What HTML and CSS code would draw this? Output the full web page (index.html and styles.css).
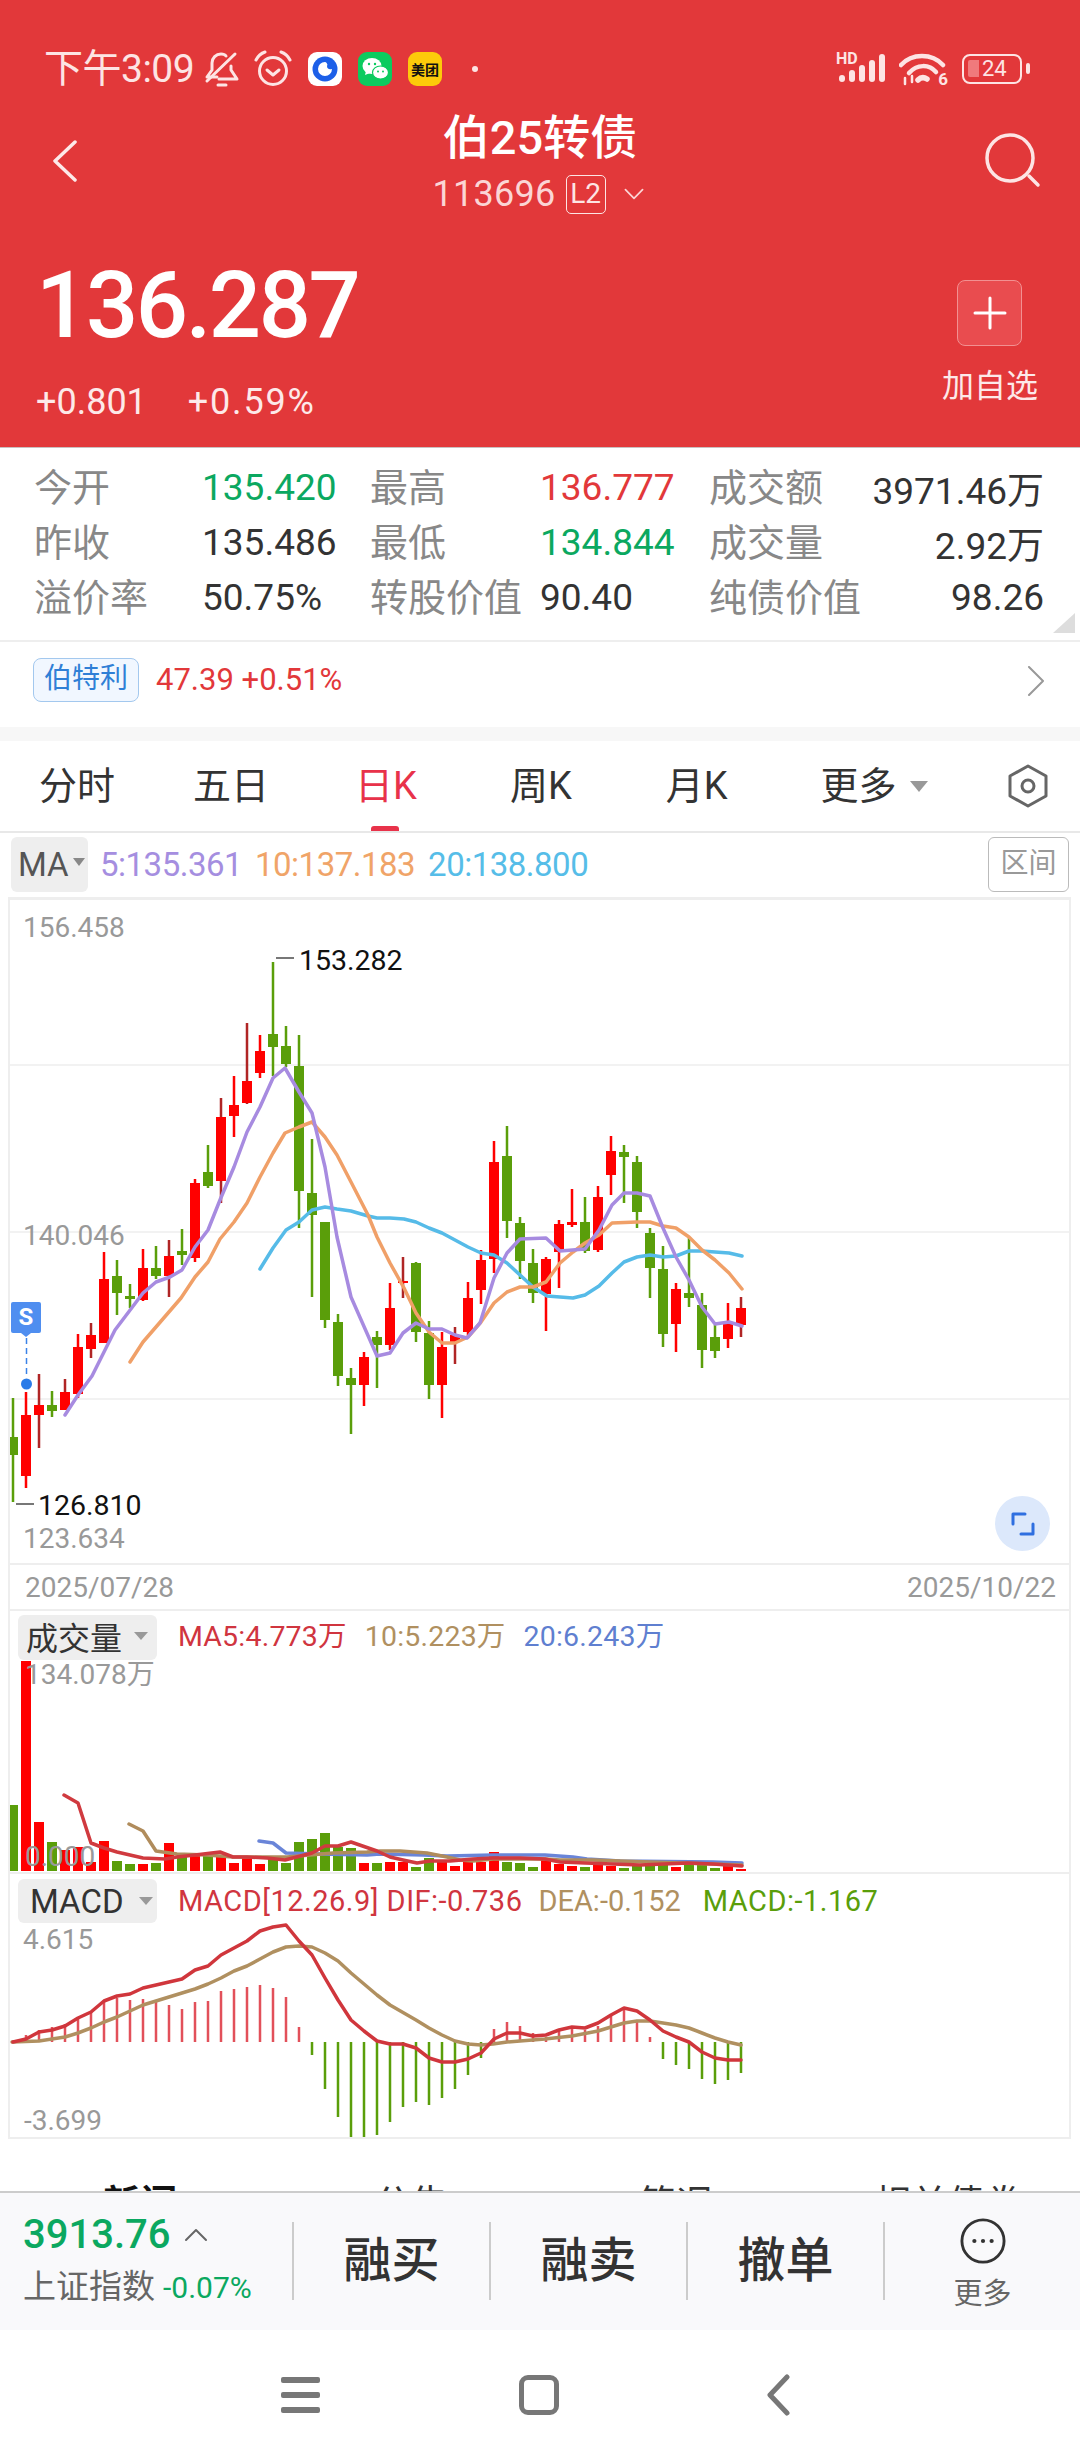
FILE: index.html
```html
<!DOCTYPE html>
<html lang="zh-CN">
<head>
    <meta charset="UTF-8">
    <meta name="viewport" content="width=device-width, initial-scale=1.0">
    <title>伯25转债</title>
    <link rel="stylesheet" href="styles.css">
</head>
<body>
    <div class="page">
        <header class="header">
            <div class="status-bar">
                <span class="status-time">下午3:09</span>
                <svg class="ico-bell" viewBox="0 0 36 38" fill="none" stroke="#fde4e4" stroke-width="3" stroke-linecap="round" stroke-linejoin="round">
                    <path d="M13 26H3l5-7v-7c0-5 4-9 9-9 2 0 4 .6 5 2"/>
                    <path d="M27 15v4l6 9H15"/>
                    <path d="M3 30 31 3"/>
                    <path d="M14 34h8"/>
                </svg>
                <svg class="ico-alarm" viewBox="0 0 38 38" fill="none" stroke="#fde4e4" stroke-width="3" stroke-linecap="round" stroke-linejoin="round">
                    <circle cx="19" cy="21" r="13.5"/>
                    <path d="M13 20l6 5 6-5"/>
                    <path d="M2 10Q5 4 11 2"/>
                    <path d="M36 10Q33 4 27 2"/>
                </svg>
                <span class="app-ico app-blue">
                    <svg viewBox="0 0 34 34"><circle cx="17" cy="17" r="12.5" fill="#1c5fe8"/><path d="M17 10a7 7 0 1 0 7 7c-2 .6-3 .4-4-.4s-1.200-2-.6-4c-.6-1.400-1.200-2.600-2.400-2.600z" fill="#fff"/></svg>
                </span>
                <span class="app-ico app-green">
                    <svg viewBox="0 0 34 34"><ellipse cx="14" cy="14" rx="9.500" ry="8" fill="#fff"/><path d="M8 19l-1 4 5-2z" fill="#fff"/><ellipse cx="22.500" cy="20.500" rx="8" ry="6.500" fill="#fff" stroke="#0ccb5f" stroke-width="1.200"/><circle cx="11" cy="12" r="1.200" fill="#0ccb5f"/><circle cx="17" cy="12" r="1.200" fill="#0ccb5f"/><circle cx="20" cy="19.500" r="1" fill="#0ccb5f"/><circle cx="25" cy="19.500" r="1" fill="#0ccb5f"/></svg>
                </span>
                <span class="app-ico app-yellow">美团</span>
                <span class="status-dot"></span>
                <span class="status-right">
                    <span class="signal">
                        <span class="signal-hd">HD</span>
                        <svg viewBox="0 0 48 30" fill="#fde4e4">
                            <rect x="1" y="22" width="6" height="7" rx="3"/>
                            <rect x="11" y="17" width="6" height="12" rx="3"/>
                            <rect x="21" y="12" width="6" height="17" rx="3"/>
                            <rect x="31" y="7" width="6" height="22" rx="3"/>
                            <rect x="41" y="1" width="6" height="28" rx="3"/>
                        </svg>
                    </span>
                    <span class="wifi">
                        <svg viewBox="0 0 48 34" fill="none" stroke="#fde4e4" stroke-width="4.500" stroke-linecap="round">
                            <path d="M2 13C13 1 33 1 44 13"/>
                            <path d="M10 21C18 12 30 12 37 20"/>
                            <path d="M19 28c3-3 6-3 9-1" stroke-width="5.500"/>
                            <path d="M6 26v6M13 24v6" stroke-width="2.500"/>
                        </svg>
                        <span class="wifi-six">6</span>
                    </span>
                    <span class="battery">
                        <span class="battery-fill"></span>
                        <span class="battery-num">24</span>
                    </span>
                    <span class="battery-nub"></span>
                </span>
            </div>

            <div class="title-row">
                <svg class="ico-back" viewBox="0 0 26 42" fill="none" stroke="#fde9e9" stroke-width="3.500" stroke-linecap="round" stroke-linejoin="round"><path d="M23 2 3 21l20 19"/></svg>
                <div class="title-mid">
                    <div class="title-name">伯25转债</div>
                    <div class="title-code">
                        <span>113696</span>
                        <span class="badge-l2">L2</span>
                        <svg class="ico-down" viewBox="0 0 24 14" fill="none" stroke="#fbd5d5" stroke-width="2" stroke-linecap="round" stroke-linejoin="round"><path d="M2 2l10 10L22 2"/></svg>
                    </div>
                </div>
                <svg class="ico-search" viewBox="0 0 56 56" fill="none" stroke="#fde4e4" stroke-width="3.500" stroke-linecap="round"><circle cx="25" cy="26" r="23"/><path d="M44 44l9 9"/></svg>
            </div>

            <div class="quote-row">
                <div>
                    <div class="price">136.287</div>
                    <div class="price-change"><span>+0.801</span><span class="pct">+0.59%</span></div>
                </div>
                <div class="add-fav">
                    <span class="add-box"><svg viewBox="0 0 34 34" stroke="#fff" stroke-width="3" stroke-linecap="round"><path d="M17 2v30M2 17h30"/></svg></span>
                    <span class="add-text">加自选</span>
                </div>
            </div>
        </header>

        <section class="stats">
            <span class="lbl">今开</span><span class="val green">135.420</span>
            <span class="lbl">最高</span><span class="val red">136.777</span>
            <span class="lbl">成交额</span><span class="val right">3971.46万</span>
            <span class="lbl">昨收</span><span class="val">135.486</span>
            <span class="lbl">最低</span><span class="val green">134.844</span>
            <span class="lbl">成交量</span><span class="val right">2.92万</span>
            <span class="lbl">溢价率</span><span class="val">50.75%</span>
            <span class="lbl">转股价值</span><span class="val">90.40</span>
            <span class="lbl">纯债价值</span><span class="val right">98.26</span>
            <span class="corner"></span>
        </section>

        <section class="related">
            <span class="tag">伯特利</span>
            <span class="related-num">47.39 +0.51%</span>
            <svg class="ico-next" viewBox="0 0 18 30" fill="none" stroke="#999" stroke-width="2" stroke-linecap="round" stroke-linejoin="round"><path d="M2 1l14 14L2 29"/></svg>
        </section>

        <div class="gap"></div>

        <nav class="tabs">
            <span class="tab t1">分时</span>
            <span class="tab t2">五日</span>
            <span class="tab t3 active">日K</span>
            <span class="tab t4">周K</span>
            <span class="tab t5">月K</span>
            <span class="tab t6">更多<i class="caret"></i></span>
            <svg class="ico-hex" viewBox="0 0 42 44" fill="none" stroke="#666" stroke-width="3" stroke-linejoin="round"><path d="M21 2 39 12v20L21 42 3 32V12z"/><circle cx="21" cy="22" r="6"/></svg>
        </nav>

        <div class="ma-row">
            <span class="ma-btn">MA<i class="caret small"></i></span>
            <span class="ma-legend">
                <span class="c-purple">5:135.361</span>
                <span class="c-orange">10:137.183</span>
                <span class="c-blue">20:138.800</span>
            </span>
            <span class="range-btn">区间</span>
        </div>

        <div class="charts">
            <div class="kline-box">
                <svg id="kline" class="chart-svg kline" viewBox="10 897 1059 668">
                    <text x="23" y="937">156.458</text>
                    <text x="23" y="1245">140.046</text>
                    <text x="23" y="1548">123.634</text>
                    <text class="mark" x="299" y="970">153.282</text>
                    <text class="mark" x="38" y="1515">126.810</text>
                </svg>
                <div class="s-pin">S</div>
                <span class="expand">
                    <svg viewBox="0 0 24 24" fill="none" stroke="#2f6fe0" stroke-width="3" stroke-linecap="round" stroke-linejoin="round"><path d="M2 12V2h12"/><path d="M22 12v10H10"/></svg>
                </span>
            </div>

            <div class="dates"><span>2025/07/28</span><span>2025/10/22</span></div>

            <div class="sub-head vol-head">
                <span class="sub-btn">成交量<i class="caret"></i></span>
                <span class="sub-legend">
                    <span class="c-red">MA5:4.773万</span>
                    <span class="c-tan">10:5.223万</span>
                    <span class="c-steel">20:6.243万</span>
                </span>
            </div>
            <svg id="volume" class="chart-svg volume" viewBox="10 1660 1059 212">
                <text x="25" y="1684">134.078万</text>
                <text x="25" y="1866">0.000</text>
            </svg>

            <div class="sub-head macd-head">
                <span class="sub-btn mono">MACD<i class="caret"></i></span>
                <span class="sub-legend">
                    <span class="c-red spaced">MACD[12.26.9] DIF:-0.736</span>
                    <span class="c-tan">DEA:-0.152</span>
                    <span class="c-lime spaced macd-val">MACD:-1.167</span>
                </span>
            </div>
            <svg id="macd" class="chart-svg macd" viewBox="10 1923 1059 214">
                <text x="23" y="1949">4.615</text>
                <text x="24" y="2130">-3.699</text>
            </svg>
        </div>

        <div class="info-tabs">
            <span class="strong">新闻</span>
            <span>公告</span>
            <span>简况</span>
            <span>相关债券</span>
        </div>

        <footer class="trade-bar">
            <div class="index-box">
                <div class="index-top">
                    <span class="index-num">3913.76</span>
                    <svg viewBox="0 0 24 14" fill="none" stroke="#666" stroke-width="2" stroke-linecap="round" stroke-linejoin="round"><path d="M2 12 12 2l10 10"/></svg>
                </div>
                <div class="index-bottom"><span>上证指数</span><span class="index-pct">-0.07%</span></div>
            </div>
            <span class="trade-btn">融买</span>
            <span class="trade-btn">融卖</span>
            <span class="trade-btn">撤单</span>
            <div class="trade-more">
                <svg viewBox="0 0 48 48" fill="none" stroke="#333" stroke-width="3"><circle cx="24" cy="24" r="22"/><g fill="#333" stroke="none"><circle cx="15" cy="24" r="2.200"/><circle cx="24" cy="24" r="2.200"/><circle cx="33" cy="24" r="2.200"/></g></svg>
                <span>更多</span>
            </div>
        </footer>

        <div class="sys-nav">
            <span class="nav-menu"><i></i><i></i><i></i></span>
            <span class="nav-home"></span>
            <svg class="nav-back" viewBox="0 0 26 42" fill="none" stroke="#777" stroke-width="5" stroke-linecap="round" stroke-linejoin="round"><path d="M22 3 5 21l17 18"/></svg>
        </div>
    </div>

    <script src="chart.js"></script>
</body>
</html>
```

FILE: styles.css
```css
* {
    margin: 0;
    padding: 0;
    box-sizing: border-box;
}

html, body {
    width: 1080px;
    height: 2460px;
    overflow: hidden;
    background: #fff;
}

body {
    font-family: Roboto, "Noto Sans CJK SC", sans-serif;
    color: #333;
}

.page {
    width: 1080px;
    height: 2460px;
    display: flex;
    flex-direction: column;
}

i {
    font-style: normal;
}

svg {
    display: block;
    flex: none;
}

/* header */
.header {
    height: 448px;
    flex: none;
    background: #e2383a;
    border-bottom: 1px solid #c9c0c0;
    color: #fff;
}

.status-bar {
    height: 105px;
    display: flex;
    align-items: center;
    padding: 32px 0 0 44px;
    color: #fde4e4;
}

.status-time {
    width: 158px;
    font-size: 39px;
    line-height: 40px;
    white-space: nowrap;
    letter-spacing: -0.5px;
}

.ico-bell {
    width: 36px;
    height: 38px;
    margin: 2px 0 0 2px;
}

.ico-alarm {
    width: 38px;
    height: 38px;
    margin-left: 14px;
}

.app-ico {
    width: 34px;
    height: 34px;
    border-radius: 9px;
    display: flex;
    align-items: center;
    justify-content: center;
    margin-left: 16px;
    overflow: hidden;
}

.app-ico svg {
    width: 34px;
    height: 34px;
}

.app-blue {
    background: #fff;
}

.app-green {
    background: #0ccb5f;
}

.app-yellow {
    background: #fdcb0a;
    color: #111;
    font-size: 14px;
    font-weight: 700;
    white-space: nowrap;
}

.status-dot {
    width: 6px;
    height: 6px;
    border-radius: 50%;
    background: #fde4e4;
    margin-left: 30px;
}

.status-right {
    margin-left: auto;
    display: flex;
    align-items: center;
    padding-right: 50px;
}

.signal {
    position: relative;
    width: 48px;
    height: 32px;
}

.signal svg {
    width: 48px;
    height: 30px;
}

.signal-hd {
    position: absolute;
    left: -2px;
    top: -2px;
    font-size: 16px;
    line-height: 16px;
    font-weight: 700;
    color: #fde4e4;
}

.wifi {
    position: relative;
    width: 48px;
    height: 34px;
    margin-left: 13px;
}

.wifi svg {
    width: 48px;
    height: 34px;
}

.wifi-six {
    position: absolute;
    right: -1px;
    bottom: -2px;
    font-size: 17px;
    line-height: 17px;
    font-weight: 700;
}

.battery {
    width: 60px;
    height: 30px;
    margin-left: 15px;
    border: 2px solid #fde4e4;
    border-radius: 8px;
    display: flex;
    align-items: center;
    padding-left: 4px;
}

.battery-fill {
    width: 11px;
    height: 17px;
    background: #f07a7c;
    border-radius: 2px 0 0 2px;
}

.battery-num {
    font-size: 22px;
    line-height: 26px;
    margin-left: 3px;
}

.battery-nub {
    width: 4px;
    height: 11px;
    margin-left: 4px;
    background: #fde4e4;
    border-radius: 2px;
}

.title-row {
    height: 115px;
    display: flex;
    align-items: flex-start;
    justify-content: space-between;
    padding: 0 39px 0 52px;
    position: relative;
}

.ico-back {
    width: 26px;
    height: 42px;
    margin-top: 35px;
}

.title-mid {
    position: absolute;
    left: 0;
    right: 0;
    top: 3px;
    display: flex;
    flex-direction: column;
    align-items: center;
}

.title-name {
    font-size: 47px;
    line-height: 60px;
    font-weight: 500;
    color: #fff;
}

.title-code {
    display: flex;
    align-items: center;
    font-size: 36px;
    line-height: 40px;
    color: #fbd5d5;
    margin-top: 6px;
    padding-right: 3px;
    letter-spacing: 0.3px;
}

.badge-l2 {
    width: 40px;
    height: 39px;
    border: 1.5px solid #fde4e4;
    border-radius: 5px;
    margin-left: 10px;
    font-size: 28px;
    line-height: 36px;
    text-align: center;
    color: #fde4e4;
    letter-spacing: 0;
}

.ico-down {
    width: 22px;
    height: 12px;
    margin-left: 17px;
}

.ico-search {
    width: 56px;
    height: 56px;
    margin-top: 27px;
}

.quote-row {
    height: 227px;
    display: flex;
    justify-content: space-between;
    padding: 36px 42px 0 36px;
}

.price {
    font-size: 92px;
    line-height: 100px;
    font-weight: 500;
    letter-spacing: -2.4px;
    color: #fff;
}

.price-change {
    display: flex;
    gap: 41px;
    font-size: 36px;
    line-height: 44px;
    margin-top: 24px;
    color: #fde9e9;
}

.pct {
    letter-spacing: 1.8px;
}

.add-fav {
    display: flex;
    flex-direction: column;
    align-items: center;
    padding-top: 24px;
}

.add-box {
    width: 65px;
    height: 66px;
    background: #e94c4f;
    border: 1.5px solid #f29091;
    border-radius: 8px;
    display: flex;
    align-items: center;
    justify-content: center;
}

.add-box svg {
    width: 34px;
    height: 34px;
}

.add-text {
    font-size: 32px;
    line-height: 44px;
    margin-top: 18px;
    color: #fde9e9;
}

/* stats */
.stats {
    flex: none;
    height: 194px;
    position: relative;
    display: grid;
    grid-template-columns: 168px 168px 170px 169px 1fr auto;
    grid-auto-rows: 55px;
    align-items: center;
    padding: 12px 36px 0 34px;
    border-bottom: 2px solid #eee;
    font-size: 38px;
}

.lbl {
    color: #888;
    white-space: nowrap;
    line-height: 50px;
    margin-top: 0;
}

.val {
    color: #333;
    white-space: nowrap;
    font-size: 37px;
}

.right {
    text-align: right;
}

.green {
    color: #0ba860;
}

.red {
    color: #e2383a;
}

.corner {
    position: absolute;
    right: 5px;
    bottom: 7px;
    width: 0;
    height: 0;
    border-left: 22px solid transparent;
    border-bottom: 20px solid #ddd;
}

.related {
    flex: none;
    height: 85px;
    display: flex;
    align-items: flex-start;
    padding: 16px 35px 0 33px;
}

.tag {
    width: 106px;
    height: 44px;
    background: #f1f7ff;
    border: 1.5px solid #a3c8ee;
    border-radius: 8px;
    color: #2f7fd6;
    font-size: 28px;
    line-height: 40px;
    text-align: center;
}

.related-num {
    margin-left: 17px;
    color: #e2383a;
    font-size: 31px;
    line-height: 44px;
}

.ico-next {
    width: 18px;
    height: 30px;
    margin: 8px 0 0 auto;
}

.gap {
    flex: none;
    height: 14px;
    background: #f7f7f7;
}

/* period tabs */
.tabs {
    flex: none;
    height: 92px;
    position: relative;
    display: flex;
    align-items: center;
    border-bottom: 2px solid #e8e8e8;
    font-size: 38px;
    color: #333;
}

.tab {
    white-space: nowrap;
    line-height: 46px;
}

.t1 { margin-left: 39px; }
.t2 { margin-left: 78px; }
.t3 { margin-left: 86px; }
.t4 { margin-left: 93px; }
.t5 { margin-left: 94px; }
.t6 { margin-left: 93px; display: flex; align-items: center; }

.active {
    color: #e8324a;
}

.active::after {
    content: "";
    position: absolute;
    left: 371px;
    bottom: 0;
    width: 28px;
    height: 5px;
    border-radius: 3px 3px 0 0;
    background: #e8324a;
}

.caret {
    width: 0;
    height: 0;
    border-left: 9px solid transparent;
    border-right: 9px solid transparent;
    border-top: 11px solid #999;
    margin-left: 13px;
}

.caret.small {
    border-left-width: 6px;
    border-right-width: 6px;
    border-top-width: 8px;
    border-top-color: #888;
    margin-left: 4px;
    margin-top: -6px;
}

.ico-hex {
    width: 42px;
    height: 44px;
    margin-left: auto;
    margin-right: 31px;
}

/* MA legend */
.ma-row {
    flex: none;
    height: 64px;
    display: flex;
    align-items: flex-start;
    padding: 4px 11px 0 11px;
}

.ma-btn {
    width: 77px;
    height: 55px;
    background: #eee;
    border-radius: 6px;
    display: flex;
    align-items: center;
    padding-left: 7px;
    font-size: 33px;
    color: #555;
}

.ma-legend {
    display: flex;
    gap: 13px;
    margin-left: 12px;
    font-size: 33px;
    line-height: 55px;
    letter-spacing: -0.5px;
}

.c-purple { color: #a58ee0; }
.c-orange { color: #f0a468; }
.c-blue { color: #56bde8; }
.c-red { color: #d0353f; }
.c-tan { color: #b09060; }
.c-steel { color: #5f7fd0; }
.c-lime { color: #5a9e0a; }

.range-btn {
    width: 81px;
    height: 55px;
    margin-left: auto;
    border: 1.5px solid #bbb;
    border-radius: 6px;
    color: #999;
    font-size: 28px;
    line-height: 51px;
    text-align: center;
}

/* charts */
.charts {
    flex: none;
    height: 1242px;
    margin: 0 9px 0 8px;
    border-left: 2px solid #eee;
    border-right: 2px solid #eee;
    border-bottom: 2px solid #eee;
    position: relative;
}

.chart-svg {
    width: 1059px;
}

.chart-svg text {
    font-family: Roboto, "Noto Sans CJK SC", sans-serif;
    font-size: 28px;
    fill: #999;
}

.chart-svg text.mark {
    fill: #111;
    font-size: 28.500px;
}

.kline-box {
    position: relative;
    height: 668px;
    border-bottom: 2px solid #eee;
    overflow: hidden;
}

.kline {
    height: 668px;
}

.volume {
    height: 212px;
}

.macd {
    height: 214px;
}

.s-pin {
    position: absolute;
    left: 1px;
    top: 405px;
    width: 30px;
    height: 31px;
    background: #4f8ef0;
    border-radius: 2px;
    color: #fff;
    font-size: 24px;
    font-weight: 700;
    line-height: 31px;
    text-align: center;
}

.s-pin::after {
    content: "";
    position: absolute;
    left: 10px;
    top: 31px;
    border-left: 5px solid transparent;
    border-right: 5px solid transparent;
    border-top: 4px solid #4f8ef0;
}

.expand {
    position: absolute;
    left: 985px;
    top: 599px;
    width: 55px;
    height: 55px;
    border-radius: 50%;
    background: #dce8fb;
    display: flex;
    align-items: center;
    justify-content: center;
}

.expand svg {
    width: 24px;
    height: 24px;
}

.dates {
    height: 46px;
    display: flex;
    justify-content: space-between;
    align-items: center;
    padding: 0 13px 0 15px;
    font-size: 28px;
    color: #999;
    border-bottom: 2px solid #eee;
}

.sub-head {
    display: flex;
    align-items: flex-start;
    padding: 4px 0 0 8px;
    height: 49px;
}

.vol-head .sub-legend {
    font-size: 28.500px;
    gap: 18px;
    letter-spacing: 0.2px;
}

.macd-head {
    height: 51px;
    padding-top: 5px;
    border-top: 2px solid #eee;
}

.sub-btn {
    width: 139px;
    height: 45px;
    background: #eee;
    border-radius: 6px;
    display: flex;
    align-items: center;
    padding: 0 0 4px 8px;
    font-size: 32px;
    color: #333;
    white-space: nowrap;
}

.macd-head .sub-btn {
    height: 44px;
}

.sub-btn.mono {
    padding: 0 0 0 12px;
    font-size: 33px;
}

.sub-btn .caret {
    border-left-width: 7px;
    border-right-width: 7px;
    border-top-width: 8px;
    margin-left: 12px;
}

.sub-btn.mono .caret {
    margin-left: 15px;
}

.sub-legend {
    display: flex;
    gap: 16px;
    margin-left: 21px;
    font-size: 29px;
    line-height: 44px;
    white-space: nowrap;
}

.spaced {
    letter-spacing: 0.5px;
}

.macd-val {
    margin-left: 6px;
}

/* cut off by the trade bar */
.info-tabs {
    flex: none;
    height: 52px;
    overflow: hidden;
    display: flex;
    padding-top: 42px;
    font-size: 37px;
    line-height: 48px;
    color: #333;
}

.info-tabs span:nth-child(1) { margin-left: 103px; font-weight: 700; color: #111; }
.info-tabs span:nth-child(2) { margin-left: 197px; }
.info-tabs span:nth-child(3) { margin-left: 191px; }
.info-tabs span:nth-child(4) { margin-left: 161px; }

/* bottom bar */
.trade-bar {
    flex: none;
    height: 139px;
    background: #f9f9fb;
    border-top: 2px solid #ccc;
    display: flex;
    align-items: flex-start;
    position: relative;
}

.index-box {
    width: 294px;
    height: 78px;
    margin-top: 29px;
    padding-left: 23px;
    border-right: 2px solid #ccc;
}

.index-top {
    display: flex;
    align-items: center;
    height: 44px;
    margin-top: -9px;
}

.index-num {
    font-size: 40px;
    line-height: 44px;
    font-weight: 500;
    color: #0ba860;
}

.index-top svg {
    width: 24px;
    height: 14px;
    margin: 0 0 0 13px;
}

.index-bottom {
    display: flex;
    align-items: baseline;
    gap: 8px;
    margin-top: 10px;
    font-size: 33px;
    line-height: 40px;
    color: #666;
    white-space: nowrap;
}

.index-pct {
    color: #0ba860;
    font-size: 30px;
}

.trade-btn {
    width: 197px;
    height: 78px;
    margin-top: 29px;
    border-right: 2px solid #ccc;
    font-size: 48px;
    line-height: 78px;
    font-weight: 500;
    text-align: center;
    color: #333;
}

.trade-btn:nth-of-type(4) {
    width: 198px;
}

.trade-more {
    flex: 1;
    display: flex;
    flex-direction: column;
    align-items: center;
    padding: 25px 0 0 0;
    font-size: 29px;
    line-height: 36px;
    color: #666;
}

.trade-more svg {
    width: 46px;
    height: 46px;
}

.trade-more span {
    margin-top: 12px;
}

/* android nav */
.sys-nav {
    flex: 1;
    display: flex;
    align-items: flex-start;
    padding-top: 45px;
    background: #fff;
}

.nav-menu {
    width: 39px;
    height: 36px;
    margin-left: 281px;
    margin-top: 2px;
    display: flex;
    flex-direction: column;
    justify-content: space-between;
}

.nav-menu i {
    display: block;
    height: 6px;
    border-radius: 2px;
    background: #777;
}

.nav-home {
    width: 40px;
    height: 40px;
    margin-left: 199px;
    border: 5px solid #777;
    border-radius: 9px;
}

.nav-back {
    width: 26px;
    height: 42px;
    margin-left: 206px;
    margin-top: -1px;
}
```

FILE: chart.js
```js
// all y values below are page pixels, the svg viewBoxes line up with the page
const RED = '#ff0000';
const GREEN = '#5a9e0a';
const xAt = i => 13 + 13 * i;

// hi, body top, body bottom, lo
const candles = [
    [1398, 1437, 1455, 1502, 'g'], [1392, 1415, 1476, 1488, 'r'], [1374, 1405, 1415, 1448, 'r'],
    [1391, 1405, 1411, 1417, 'g'], [1379, 1392, 1410, 1410, 'r'], [1334, 1347, 1394, 1398, 'r'],
    [1323, 1335, 1349, 1358, 'r'], [1252, 1279, 1343, 1343, 'r'], [1260, 1276, 1293, 1315, 'g'],
    [1284, 1296, 1299, 1308, 'g'], [1249, 1268, 1300, 1301, 'r'], [1246, 1268, 1276, 1279, 'g'],
    [1240, 1256, 1276, 1297, 'r'], [1229, 1251, 1255, 1265, 'g'], [1179, 1183, 1258, 1262, 'r'],
    [1145, 1172, 1186, 1188, 'g'], [1098, 1117, 1181, 1203, 'r'], [1076, 1105, 1116, 1137, 'r'],
    [1023, 1081, 1103, 1104, 'r'], [1035, 1051, 1073, 1078, 'r'], [962, 1034, 1047, 1076, 'g'],
    [1026, 1046, 1064, 1067, 'g'], [1035, 1066, 1191, 1228, 'g'], [1139, 1193, 1215, 1297, 'g'],
    [1222, 1222, 1320, 1328, 'g'], [1314, 1322, 1376, 1386, 'g'], [1368, 1378, 1385, 1434, 'g'],
    [1352, 1357, 1385, 1406, 'r'], [1331, 1337, 1345, 1388, 'g'], [1283, 1308, 1345, 1350, 'r'],
    [1257, 1281, 1283, 1298, 'r'], [1262, 1263, 1332, 1342, 'g'], [1321, 1333, 1385, 1399, 'g'],
    [1332, 1347, 1385, 1418, 'r'], [1327, 1335, 1342, 1364, 'r'], [1282, 1298, 1332, 1337, 'r'],
    [1250, 1260, 1290, 1304, 'r'], [1141, 1162, 1259, 1273, 'r'], [1126, 1156, 1221, 1238, 'g'],
    [1217, 1223, 1261, 1279, 'g'], [1249, 1263, 1293, 1303, 'g'], [1257, 1259, 1294, 1331, 'r'],
    [1220, 1224, 1252, 1288, 'r'], [1189, 1222, 1225, 1227, 'r'], [1197, 1222, 1251, 1253, 'g'],
    [1186, 1197, 1250, 1252, 'r'], [1136, 1151, 1175, 1195, 'r'], [1145, 1152, 1157, 1203, 'g'],
    [1156, 1162, 1212, 1228, 'g'], [1228, 1233, 1268, 1298, 'g'], [1246, 1269, 1334, 1347, 'g'],
    [1283, 1289, 1324, 1352, 'r'], [1238, 1293, 1298, 1307, 'g'], [1293, 1305, 1350, 1368, 'g'],
    [1325, 1337, 1351, 1358, 'g'], [1303, 1324, 1339, 1348, 'r'], [1297, 1308, 1325, 1337, 'r']
];
// these wicks look darker in the app
const darkWicks = new Set([2, 4, 6, 12, 16, 18, 30, 34, 56]);

const ma5 = '65,1415 78,1395 92,1376 115,1330 143,1293 156,1282 170,1277 182,1270 195,1247 208,1230 220,1200 234,1167 247,1132 260,1107 273,1078 285,1068 299,1092 312,1113 325,1167 337,1237 351,1297 377,1356 390,1353 403,1333 416,1323 429,1329 442,1329 455,1335 467,1338 480,1323 494,1278 507,1253 520,1239 546,1238 560,1251 585,1249 599,1230 612,1205 624,1193 637,1193 650,1196 663,1228 676,1257 689,1280 702,1307 715,1324 729,1322 742,1326';
const ma10 = '130,1362 143,1342 181,1298 195,1277 208,1262 220,1239 234,1222 247,1203 260,1177 273,1153 285,1133 299,1127 312,1122 325,1137 337,1155 351,1182 368,1215 377,1237 390,1263 404,1288 416,1313 429,1332 442,1343 455,1343 468,1337 481,1322 494,1303 507,1292 520,1287 533,1287 546,1282 560,1263 573,1252 585,1243 599,1235 612,1223 637,1222 650,1222 663,1226 676,1228 689,1237 702,1250 715,1260 729,1273 742,1289';
const ma20 = '260,1269 273,1248 286,1230 299,1222 312,1210 325,1207 337,1209 351,1211 368,1216 377,1218 390,1218 404,1219 416,1222 429,1228 442,1233 455,1240 468,1247 481,1253 494,1255 507,1263 520,1275 533,1287 547,1296 560,1297 573,1298 585,1295 599,1286 612,1273 624,1262 637,1257 650,1255 663,1257 676,1256 689,1251 702,1251 715,1252 729,1253 742,1256';

// bar tops, baseline is 1871
const volumes = [
    [1805, 'g'], [1661, 'r'], [1822, 'r'], [1842, 'g'], [1850, 'r'], [1847, 'r'], [1862, 'r'], [1841, 'r'],
    [1861, 'g'], [1864, 'g'], [1864, 'r'], [1863, 'g'], [1843, 'r'], [1855, 'g'], [1855, 'r'], [1855, 'g'],
    [1855, 'r'], [1863, 'r'], [1857, 'r'], [1864, 'r'], [1859, 'g'], [1863, 'g'], [1842, 'g'], [1839, 'g'],
    [1833, 'g'], [1847, 'g'], [1848, 'g'], [1863, 'r'], [1863, 'g'], [1862, 'r'], [1862, 'r'], [1867, 'g'],
    [1858, 'g'], [1862, 'r'], [1866, 'r'], [1862, 'r'], [1862, 'r'], [1852, 'r'], [1862, 'g'], [1863, 'g'],
    [1867, 'g'], [1860, 'r'], [1864, 'r'], [1866, 'r'], [1867, 'g'], [1863, 'r'], [1866, 'r'], [1868, 'g'],
    [1866, 'g'], [1865, 'g'], [1865, 'g'], [1867, 'r'], [1865, 'g'], [1865, 'g'], [1868, 'g'], [1866, 'r'],
    [1869, 'r']
];
const volMa5 = '64,1795 78,1803 91,1843 104,1848 117,1852 143,1858 165,1859 177,1857 195,1855 220,1852 233,1857 247,1857 267,1858 285,1860 312,1853 325,1846 338,1846 351,1842 377,1851 390,1857 403,1860 417,1863 430,1861 450,1861 473,1859 493,1858 520,1858 545,1859 560,1862 585,1863 613,1864 640,1865 688,1863 713,1864 742,1866';
const volMa10 = '129,1824 143,1831 156,1851 177,1854 207,1855 233,1857 287,1857 333,1853 367,1852 380,1851 400,1851 427,1853 447,1857 460,1860 473,1861 493,1859 545,1859 560,1860 593,1860 620,1861 742,1865';
const volMa20 = '259,1841 273,1843 286,1853 320,1854 367,1855 380,1854 423,1855 447,1856 493,1855 545,1855 573,1857 587,1859 620,1861 713,1862 742,1863';

// macd bar ends, zero line is 2042, index 0 has no bar
const macdBars = [
    2042, 2035, 2030, 2027, 2024, 2017, 2011, 2000, 1998, 2000, 1999, 2002, 2005, 2009, 2002, 2001, 1991, 1989, 1987, 1985, 1988, 1997, 2027,
    2055, 2089, 2117, 2137, 2137, 2135, 2122, 2107, 2102, 2105, 2098, 2089, 2075, 2058,
    2029, 2022, 2026, 2033, 2037, 2030, 2028, 2030, 2026, 2015, 2009, 2022, 2037,
    2059, 2065, 2069, 2079, 2084, 2080, 2073
];
const dif = [
    2042, 2039, 2032, 2030, 2026, 2018, 2012, 2001, 1996, 1994, 1988, 1985, 1982, 1979, 1970, 1966, 1955, 1948, 1941, 1931,
    1927, 1925, 1941, 1955, 1978, 2000, 2020, 2031, 2041, 2044, 2044, 2048, 2058, 2062, 2062, 2059, 2053, 2039, 2033, 2033,
    2036, 2035, 2030, 2027, 2028, 2023, 2015, 2008, 2011, 2020, 2031, 2037, 2042, 2052, 2058, 2060, 2060
];
const dea = '12,2042 39,2041 65,2037 78,2033 91,2028 104,2022 117,2017 130,2011 143,2005 169,1997 195,1989 208,1984 221,1978 234,1971 247,1966 260,1959 273,1952 286,1947 299,1946 312,1947 325,1953 338,1961 351,1973 364,1984 377,1995 390,2005 416,2020 429,2028 442,2035 455,2041 468,2044 481,2045 493,2044 507,2042 520,2041 545,2039 572,2036 598,2031 611,2027 624,2023 637,2021 650,2021 663,2023 676,2025 689,2028 702,2033 715,2038 728,2042 741,2045';

function line(points, color, width) {
    return `<polyline points="${points}" fill="none" stroke="${color}" stroke-width="${width}" stroke-linejoin="round" stroke-linecap="round"/>`;
}

function drawKline() {
    let html = '<rect x="10" y="897" width="1059" height="3" fill="#eee"/>';
    [1065, 1232, 1399].forEach(y => {
        html += `<rect x="10" y="${y - 1}" width="1059" height="2" fill="#f2f2f2"/>`;
    });
    candles.forEach((c, i) => {
        const x = xAt(i);
        const color = c[4] === 'r' ? RED : GREEN;
        const wick = c[4] === 'r' && darkWicks.has(i) ? '#b02525' : color;
        html += `<rect x="${x - 1.25}" y="${c[0]}" width="2.500" height="${c[3] - c[0]}" fill="${wick}"/>`;
        html += `<rect x="${x - 5}" y="${c[1]}" width="10" height="${c[2] - c[1]}" fill="${color}"/>`;
    });
    html += line(ma20, '#56bbe8', 3.5) + line(ma10, '#f0a068', 3.5) + line(ma5, '#a78be0', 3.5);
    // high / low ticks and the sell marker
    html += '<rect x="276" y="957" width="18" height="2" fill="#777"/>';
    html += '<rect x="16" y="1503" width="18" height="2" fill="#777"/>';
    html += '<line x1="26.500" y1="1338" x2="26.500" y2="1378" stroke="#3b82e8" stroke-width="1.500" stroke-dasharray="6 4"/>';
    html += '<circle cx="26.500" cy="1384" r="5.500" fill="#2a7be8"/>';
    document.getElementById('kline').insertAdjacentHTML('afterbegin', html);
}

function drawVolume() {
    let html = '';
    volumes.forEach((v, i) => {
        const color = v[1] === 'r' ? RED : GREEN;
        html += `<rect x="${xAt(i) - 5}" y="${v[0]}" width="10" height="${1871 - v[0]}" fill="${color}"/>`;
    });
    html += line(volMa20, '#6a85d8', 3.5) + line(volMa10, '#b08c5c', 3.5) + line(volMa5, '#d03a3f', 3.5);
    document.getElementById('volume').insertAdjacentHTML('afterbegin', html);
}

function drawMacd() {
    let html = '';
    macdBars.forEach((y, i) => {
        const color = y > 2042 ? GREEN : '#e2505a';
        const top = Math.min(y, 2042);
        html += `<rect x="${xAt(i) - 1.25}" y="${top}" width="2.500" height="${Math.abs(y - 2042)}" fill="${color}"/>`;
    });
    const difPoints = dif.map((y, i) => `${xAt(i)},${y}`).join(' ');
    html += line(dea, '#b09060', 3.5) + line(difPoints, '#d0363c', 3.5);
    document.getElementById('macd').insertAdjacentHTML('afterbegin', html);
}

drawKline();
drawVolume();
drawMacd();
```
